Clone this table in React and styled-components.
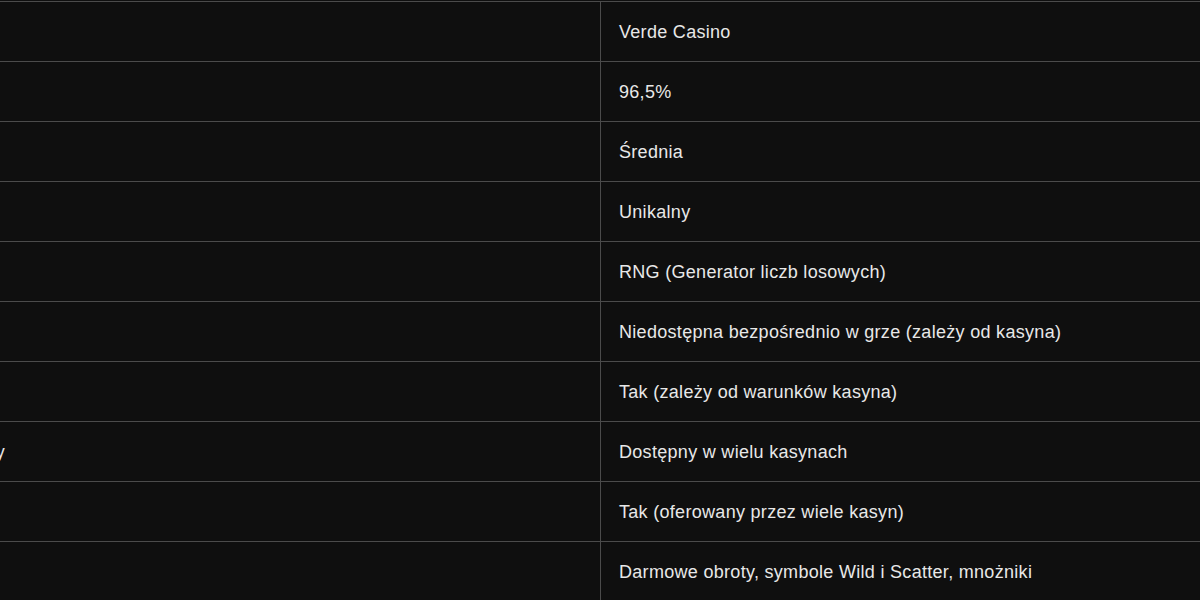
import React from "react";
import styled, { createGlobalStyle } from "styled-components";

const Global = createGlobalStyle`
  html, body {
    margin: 0;
    padding: 0;
    background: #0f0f0f;
    overflow: hidden;
  }
  body {
    font-family: "Liberation Sans", Arial, sans-serif;
  }
`;

const Viewport = styled.div`
  width: 1200px;
  height: 600px;
  overflow: hidden;
  background: #0f0f0f;
  padding-top: 1px;
  box-sizing: border-box;
`;

const Table = styled.table`
  border-collapse: collapse;
  table-layout: fixed;
  width: ${(p) => p.$shift + 1201}px;
  margin-left: -${(p) => p.$shift}px;
  color: #e8e8e8;
  font-size: 18px;
  letter-spacing: 0.3px;
`;

const Col = styled.col`
  width: ${(p) => p.$w}px;
`;

const Row = styled.tr`
  height: 60px;
`;

const Cell = styled.td`
  border: 1px solid #4b4b4b;
  padding: 2px 18px 0 18px;
  height: 60px;
  box-sizing: border-box;
  vertical-align: middle;
  white-space: nowrap;
  overflow: hidden;
`;

const rows = [
  ["Kasyno", "Verde Casino"],
  ["RTP", "96,5%"],
  ["Zmienność", "Średnia"],
  ["Motyw", "Unikalny"],
  ["Mechanika", "RNG (Generator liczb losowych)"],
  ["Wersja demo", "Niedostępna bezpośrednio w grze (zależy od kasyna)"],
  ["Gra na pieniądze", "Tak (zależy od warunków kasyna)"],
  ["Dostępność darmowej wersji gry", "Dostępny w wielu kasynach"],
  ["Bonus", "Tak (oferowany przez wiele kasyn)"],
  ["Funkcje", "Darmowe obroty, symbole Wild i Scatter, mnożniki"],
];

const SHIFT = 282;

export default function App() {
  return (
    <Viewport>
      <Global />
      <Table $shift={SHIFT}>
        <colgroup>
          <Col $w={SHIFT + 600} />
          <Col $w={601} />
        </colgroup>
        <tbody>
          {rows.map(([k, v]) => (
            <Row key={k}>
              <Cell>{k}</Cell>
              <Cell>{v}</Cell>
            </Row>
          ))}
        </tbody>
      </Table>
    </Viewport>
  );
}
